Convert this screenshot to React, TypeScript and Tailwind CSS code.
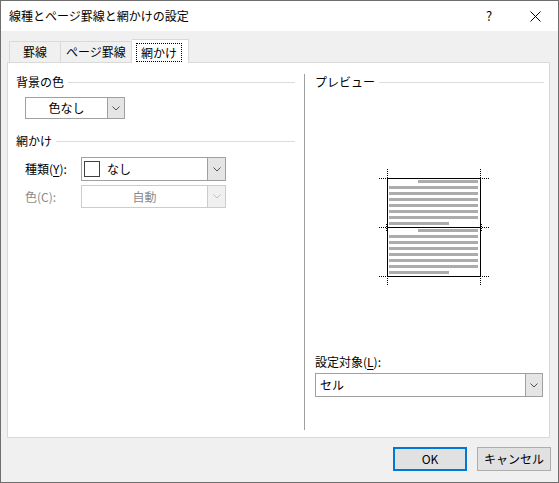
import React from 'react';

// ── 小物 ─────────────────────────────────────────────
const Chevron: React.FC<{ color?: string }> = ({ color = '#505050' }) => (
  <svg width="8" height="5" viewBox="0 0 8 5">
    <path d="M0.5 0.5 L4 4 L7.5 0.5" fill="none" stroke={color} strokeWidth="1" />
  </svg>
);

const GroupHeader: React.FC<{ label: string; className?: string }> = ({ label, className = '' }) => (
  <div className={`flex items-center h-[16px] leading-[16px] ${className}`}>
    <span>{label}</span>
    <div className="flex-1 h-px bg-[#dcdcdc] ml-[4px]" />
  </div>
);

// ── プレビュー図 ───────────────────────────────────────
const Preview: React.FC = () => {
  // 箱: x 12..105, y 14..112 (中線 63)
  const L = 12.5;
  const R = 105.5;
  const T = 14.5;
  const M = 63.5;
  const B = 112.5;
  const bars = (top: number) =>
    Array.from({ length: 8 }, (_, i) => {
      const y = top + i * 6;
      if (i === 0) return <rect key={i} x={43} y={y} width={60} height={3} fill="#acacac" />;
      if (i === 7) return <rect key={i} x={14} y={y} width={60} height={3} fill="#acacac" />;
      return <rect key={i} x={14} y={y} width={89} height={3} fill="#acacac" />;
    });
  const dot = { stroke: '#000', strokeWidth: 1, strokeDasharray: '1 1' };
  return (
    <svg width="118" height="125" viewBox="0 0 118 125" shapeRendering="crispEdges" className="block">
      {bars(16)}
      {bars(65)}
      <rect x={L} y={T} width={R - L} height={B - T} fill="none" stroke="#000" />
      <line x1={L} y1={M} x2={R} y2={M} stroke="#000" />
      {/* 角の点線 */}
      <line x1={4} y1={T} x2={L - 1} y2={T} {...dot} />
      <line x1={R + 1} y1={T} x2={114} y2={T} {...dot} />
      <line x1={L} y1={5} x2={L} y2={T - 1} {...dot} />
      <line x1={R} y1={5} x2={R} y2={T - 1} {...dot} />
      <line x1={4} y1={M} x2={L - 1} y2={M} {...dot} />
      <line x1={R + 1} y1={M} x2={114} y2={M} {...dot} />
      <line x1={L - 1} y1={M - 4} x2={L - 1} y2={M + 4} {...dot} />
      <line x1={R + 1} y1={M - 4} x2={R + 1} y2={M + 4} {...dot} />
      <line x1={4} y1={B} x2={L - 1} y2={B} {...dot} />
      <line x1={R + 1} y1={B} x2={114} y2={B} {...dot} />
      <line x1={L} y1={B + 1} x2={L} y2={122} {...dot} />
      <line x1={R} y1={B + 1} x2={R} y2={122} {...dot} />
    </svg>
  );
};

// ── 本体 ─────────────────────────────────────────────
const App: React.FC = () => {
  return (
    <div className="w-[559px] h-[483px] border border-[#6e6e6e] bg-[#f0f0f0] flex flex-col text-[12px] text-black font-['Noto_Sans_CJK_JP','Noto_Sans_CJK_SC',sans-serif] overflow-hidden">
      {/* タイトルバー */}
      <div className="h-[30px] bg-white flex items-center shrink-0">
        <span className="pl-[8px] leading-[16px]">線種とページ罫線と網かけの設定</span>
        <div className="ml-auto w-[46px] h-full flex items-center justify-center text-[13px]">?</div>
        <div className="w-[46px] h-full flex items-center justify-center">
          <svg width="11" height="11" viewBox="0 0 11 11">
            <path d="M0.5 0.5 L10.5 10.5 M10.5 0.5 L0.5 10.5" stroke="#000" strokeWidth="1" />
          </svg>
        </div>
      </div>

      <div className="flex-1 px-[6px] pt-[8px] flex flex-col">
        {/* タブ */}
        <div className="flex items-start h-[24px] pl-[2px]">
          <div className="mt-[2px] w-[52px] h-[21px] border-l border-t border-r border-[#d9d9d9] flex items-center justify-center leading-[16px]">
            罫線
          </div>
          <div className="mt-[2px] w-[71px] h-[21px] border-t border-r border-[#d9d9d9] flex items-center justify-center leading-[16px]">
            ページ罫線
          </div>
          <div className="relative z-10 w-[57px] h-[24px] bg-white border-t border-r border-[#d9d9d9] flex items-start justify-start pl-[4px] pt-[3px]">
            <span className="h-[19px] px-[4px] border border-dotted border-black leading-[17px]">網かけ</span>
          </div>
        </div>

        {/* パネル */}
        <div className="-mt-[1px] w-[543px] h-[376px] border border-[#d9d9d9] bg-white flex">
          {/* 左列 */}
          <div className="w-[296px] flex flex-col">
            <GroupHeader label="背景の色" className="mt-[11px] pl-[8px] pr-[9px]" />
            <div className="mt-[7px] ml-[17px] w-[100px] h-[22px] border border-[#a0a0a0] flex">
              <div className="flex-1 flex items-center justify-center leading-[16px]">色なし</div>
              <div className="w-[17px] bg-[#e5e5e5] border-l border-[#a0a0a0] flex items-center justify-center">
                <Chevron />
              </div>
            </div>

            <GroupHeader label="網かけ" className="mt-[14px] pl-[8px] pr-[9px]" />
            <div className="mt-[8px] flex items-center pl-[17px]">
              <span className="w-[56px] leading-[16px]">
                種類(<span className="underline underline-offset-2">Y</span>):
              </span>
              <div className="w-[145px] h-[24px] border border-[#a0a0a0] flex">
                <div className="flex-1 flex items-center pl-[2px]">
                  <div className="w-[16px] h-[16px] border border-[#404040] bg-white" />
                  <span className="ml-[7px] leading-[16px]">なし</span>
                </div>
                <div className="w-[18px] bg-[#e5e5e5] border-l border-[#a0a0a0] flex items-center justify-center">
                  <Chevron />
                </div>
              </div>
            </div>
            <div className="mt-[4px] flex items-center pl-[17px]">
              <span className="w-[56px] leading-[16px] text-[#8a8a8a]">色(C):</span>
              <div className="w-[145px] h-[23px] border border-[#cccccc] flex">
                <div className="flex-1 flex items-center justify-center leading-[16px] text-[#8a8a8a]">自動</div>
                <div className="w-[18px] bg-[#f0f0f0] border-l border-[#cccccc] flex items-center justify-center">
                  <Chevron color="#bfbfbf" />
                </div>
              </div>
            </div>
          </div>

          {/* 区切り */}
          <div className="mt-[11px] w-px h-[356px] bg-[#a0a0a0]" />

          {/* 右列 */}
          <div className="flex-1 flex flex-col">
            <GroupHeader label="プレビュー" className="mt-[11px] pl-[10px] pr-[5px]" />
            <div className="mt-[74px] ml-[70px]">
              <Preview />
            </div>
            <div className="mt-[65px] pl-[10px] leading-[16px]">
              設定対象(<span className="underline underline-offset-2">L</span>):
            </div>
            <div className="mt-[3px] ml-[10px] w-[228px] h-[24px] border border-[#a0a0a0] flex">
              <div className="flex-1 flex items-center pl-[4px] leading-[16px]">セル</div>
              <div className="w-[17px] bg-[#e5e5e5] border-l border-[#a0a0a0] flex items-center justify-center">
                <Chevron />
              </div>
            </div>
          </div>
        </div>

        {/* ボタン */}
        <div className="mt-[9px] flex justify-end gap-[10px] pr-[1px]">
          <button className="w-[74px] h-[24px] border-2 border-[#0078d7] bg-[#e1e1e1] flex items-center justify-center leading-[16px]">
            OK
          </button>
          <button className="w-[74px] h-[24px] border border-[#adadad] bg-[#e1e1e1] flex items-center justify-center leading-[16px]">
            キャンセル
          </button>
        </div>
      </div>
    </div>
  );
};

export default App;
